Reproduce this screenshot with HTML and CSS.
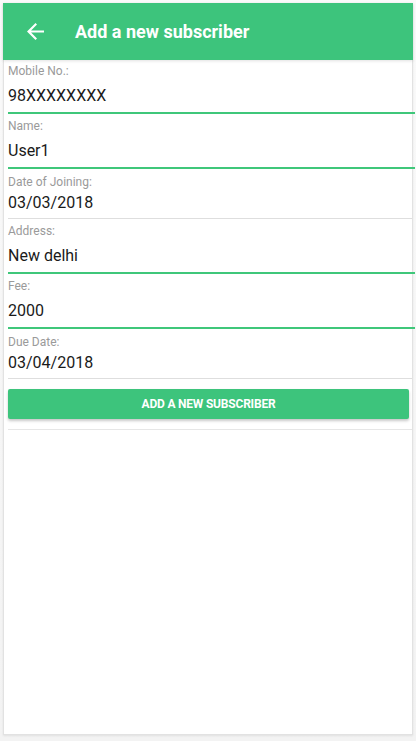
FILE: index.html
```html
<!DOCTYPE html>
<html>
<head>
<meta charset="utf-8">
<link rel="stylesheet" href="styles.css">
</head>
<body>
<div class="page">
  <div class="app">
    <header class="topbar">
      <svg class="back" viewBox="4 4 16 16" width="17" height="17" aria-hidden="true">
        <path d="M20 11H7.83l5.59-5.59L12 4l-8 8 8 8 1.41-1.41L7.83 13H20v-2z" fill="#fff"/>
      </svg>
      <h1 class="title">Add a new subscriber</h1>
    </header>
    <main class="form">
      <div class="field field--text">
        <div class="label">Mobile No.:</div>
        <div class="value">98XXXXXXXX</div>
      </div>
      <div class="field field--text">
        <div class="label">Name:</div>
        <div class="value">User1</div>
      </div>
      <div class="field field--date">
        <div class="label">Date of Joining:</div>
        <div class="value">03/03/2018</div>
      </div>
      <div class="field field--text">
        <div class="label">Address:</div>
        <div class="value">New delhi</div>
      </div>
      <div class="field field--text">
        <div class="label">Fee:</div>
        <div class="value">2000</div>
      </div>
      <div class="field field--date">
        <div class="label">Due Date:</div>
        <div class="value">03/04/2018</div>
      </div>
      <div class="actions">
        <button class="submit">ADD A NEW SUBSCRIBER</button>
      </div>
    </main>
  </div>
</div>
</body>
</html>
```

FILE: styles.css
```css
* { box-sizing: border-box; }
html, body { margin: 0; padding: 0; }
body {
  background: #f3f3f3;
  font-family: Roboto, "Liberation Sans", Arial, sans-serif;
}
.page {
  width: 416px;
  height: 741px;
  padding: 3px 3px 6px 3px;
  background: linear-gradient(#fafafa, #f3f3f3);
}
.app {
  height: 732px;
  background: #fff;
  border: 1px solid #e2e2e2;
  box-shadow: 0 1px 2px rgba(0,0,0,0.08);
  display: flex;
  flex-direction: column;
}
.topbar {
  height: 57px;
  margin: -1px -1px 0 -1px;
  background: #3dc47c;
  display: flex;
  align-items: center;
  padding-left: 24px;
  box-shadow: 0 1px 3px rgba(0,0,0,0.12);
}
.back { display: block; margin-right: 31px; }
.title {
  margin: 0;
  color: #fff;
  font-size: 18px;
  font-weight: 700;
  line-height: 22px;
}
.form {
  padding-left: 4px;
  display: flex;
  flex-direction: column;
}
.field { display: flex; flex-direction: column; }
.label {
  font-size: 12px;
  line-height: 14px;
  color: #9a9a9a;
}
.value {
  font-size: 16px;
  line-height: 20px;
  color: #1a1a1a;
}
.field--text {
  padding: 5px 0 6px 0;
  border-bottom: 2px solid #3fc77a;
  margin-right: -3px;
}
.field--text:first-child { padding-top: 4px; }
.field--text .value { margin-top: 8px; }
.field--date {
  padding: 6px 0 5px 0;
  border-bottom: 1px solid #dedede;
}
.field--date .value { margin-top: 4px; }
.actions {
  padding: 10px 3px 10px 0;
  border-bottom: 1px solid #e6e6e6;
}
.submit {
  display: block;
  width: 100%;
  height: 30px;
  border: 0;
  border-radius: 2px;
  background: #3dc47c;
  color: #fff;
  font-family: Roboto, "Liberation Sans", Arial, sans-serif;
  font-size: 12px;
  font-weight: 700;
  letter-spacing: -0.2px;
  box-shadow: 0 2px 3px rgba(0,0,0,0.22);
}
```
